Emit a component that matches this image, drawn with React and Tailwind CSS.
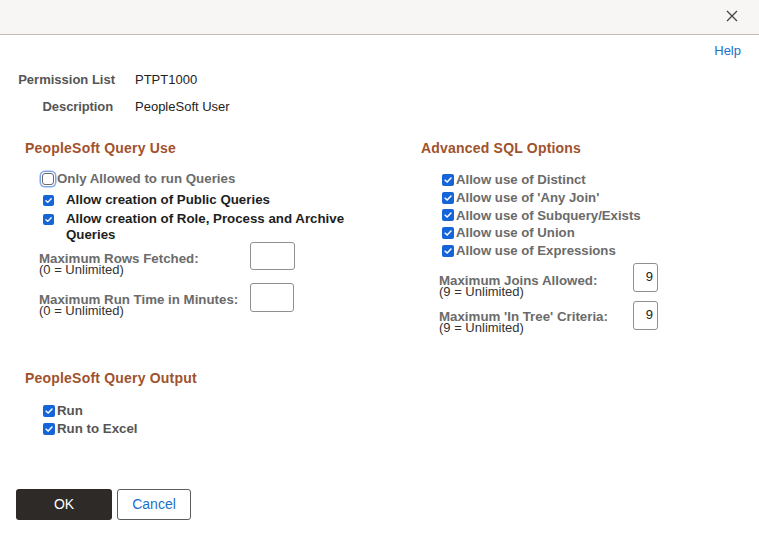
import React from "react";

function CheckBox({ checked, focused, size = 12 }) {
  if (!checked) {
    return (
      <span
        className={`inline-block shrink-0 rounded-[3px] border border-[#6b6b6b] bg-white ${
          focused ? "shadow-[0_0_0_1px_#fff,0_0_0_2.5px_#7ea7e8]" : ""
        }`}
        style={{ width: size, height: size }}
      />
    );
  }
  return (
    <span
      className="inline-flex shrink-0 items-center justify-center rounded-[2px] bg-[#1565d8]"
      style={{ width: size, height: size }}
    >
      <svg viewBox="0 0 12 12" width={size - 2} height={size - 2}>
        <path
          d="M2.6 6.2 L5 8.5 L9.6 3.6"
          fill="none"
          stroke="#fff"
          strokeWidth="1.8"
          strokeLinecap="round"
          strokeLinejoin="round"
        />
      </svg>
    </span>
  );
}

function LimitField({ label, note, value, rowClass, inputClass, labelPad }) {
  return (
    <div className={`flex ${rowClass}`}>
      <div className={`${labelPad} leading-[11px]`}>
        <div className="text-[13.3px] font-bold text-[#6b6b6b]">{label}</div>
        <div className="text-[#333]">{note}</div>
      </div>
      <div
        className={`${inputClass} rounded-[3px] border border-[#8f8f8f] bg-white pr-[4px] pt-[5px] text-right leading-[16px] text-[#222]`}
      >
        {value}
      </div>
    </div>
  );
}

const sqlOptions = [
  "Allow use of Distinct",
  "Allow use of 'Any Join'",
  "Allow use of Subquery/Exists",
  "Allow use of Union",
  "Allow use of Expressions",
];

export default function App() {
  return (
    <div className="relative h-[533px] w-[759px] overflow-hidden bg-white font-['Liberation_Sans',Arial,sans-serif] text-[13px] text-[#222]">
      {/* title bar */}
      <div className="flex h-[35px] items-center justify-end border-b border-[#c3bbb3] bg-[#f7f6f5] pr-[21px]">
        <svg width="12" height="12" viewBox="0 0 12 12" className="mt-[-2px]">
          <path d="M1 1 L11 11 M11 1 L1 11" stroke="#444" strokeWidth="1.3" />
        </svg>
      </div>

      {/* help link */}
      <div className="mt-[8px] flex h-[16px] justify-end pr-[18px] leading-[16px]">
        <span className="text-[#1b6fc8]">Help</span>
      </div>

      {/* permission list info */}
      <div className="mt-[13px] flex h-[16px] leading-[16px]">
        <div className="w-[115px] text-right font-bold text-[#555]">Permission List</div>
        <div className="ml-[20px]">PTPT1000</div>
      </div>
      <div className="mt-[11px] flex h-[16px] leading-[16px]">
        <div className="w-[113px] text-right font-bold tracking-[-0.1px] text-[#555]">Description</div>
        <div className="ml-[22px]">PeopleSoft User</div>
      </div>

      {/* two column options */}
      <div className="mt-[25px] grid grid-cols-[396px_1fr] pl-[25px]">
        <div>
          <h2 className="h-[17px] text-[14px] font-bold leading-[17px] tracking-[0.2px] text-[#a0522d]">PeopleSoft Query Use</h2>

          <div className="mt-[14px] flex h-[16px] items-center pl-[17px] leading-[16px]">
            <CheckBox focused size={12} />
            <span className="ml-[3px] text-[13.3px] font-bold text-[#6b6b6b]">Only Allowed to run Queries</span>
          </div>

          <div className="mt-[5px] flex pl-[18px] leading-[16px]">
            <div className="pt-[1px]"><CheckBox checked size={11} /></div>
            <span className="ml-[12px] text-[13.3px] font-bold text-[#1e1e1e]">Allow creation of Public Queries</span>
          </div>

          <div className="mt-[2px] flex pl-[18px] leading-[16px]">
            <div className="pt-[1px]"><CheckBox checked size={11} /></div>
            <span className="ml-[12px] w-[290px] text-[13.3px] font-bold text-[#1e1e1e]">
              Allow creation of Role, Process and Archive Queries
            </span>
          </div>

          <div className="mt-[-1px] pl-[14px]">
            <LimitField
              label="Maximum Rows Fetched:"
              note="(0 = Unlimited)"
              value=""
              rowClass="h-[28px]"
              labelPad="w-[211px] pt-[11px]"
              inputClass="h-[28px] w-[45px]"
            />
          </div>
          <div className="mt-[13px] pl-[14px]">
            <LimitField
              label="Maximum Run Time in Minutes:"
              note="(0 = Unlimited)"
              value=""
              rowClass="h-[29px]"
              labelPad="w-[211px] pt-[11px]"
              inputClass="h-[29px] w-[44px]"
            />
          </div>
        </div>

        <div>
          <h2 className="h-[17px] text-[14px] font-bold leading-[17px] tracking-[0.2px] text-[#a0522d]">Advanced SQL Options</h2>

          <div className="mt-[14px] pl-[21px] leading-[17.75px]">
            {sqlOptions.map((t) => (
              <div key={t} className="flex h-[17.75px] items-center">
                <CheckBox checked size={12} />
                <span className="ml-[2px] text-[13.2px] font-bold text-[#6b6b6b]">{t}</span>
              </div>
            ))}
          </div>

          <div className="mt-[3px] pl-[18px]">
            <LimitField
              label="Maximum Joins Allowed:"
              note="(9 = Unlimited)"
              value="9"
              rowClass="h-[29px]"
              labelPad="w-[194px] pt-[12px]"
              inputClass="h-[29px] w-[25px]"
            />
          </div>
          <div className="mt-[9px] pl-[18px]">
            <LimitField
              label="Maximum 'In Tree' Criteria:"
              note="(9 = Unlimited)"
              value="9"
              rowClass="h-[29px]"
              labelPad="w-[194px] pt-[10px]"
              inputClass="h-[29px] w-[25px]"
            />
          </div>
        </div>
      </div>

      {/* output section */}
      <div className="mt-[40px] pl-[25px]">
        <h2 className="h-[17px] text-[14px] font-bold leading-[17px] tracking-[0.2px] text-[#a0522d]">PeopleSoft Query Output</h2>
        <div className="mt-[15px] pl-[18px] leading-[18px]">
          {["Run", "Run to Excel"].map((t) => (
            <div key={t} className="flex h-[18px] items-center">
              <CheckBox checked size={12} />
              <span className="ml-[2px] text-[13.3px] font-bold text-[#555]">{t}</span>
            </div>
          ))}
        </div>
      </div>

      {/* footer buttons */}
      <div className="mt-[51px] flex gap-[5px] pl-[16px]">
        <button className="h-[31px] w-[96px] rounded-[3px] bg-[#2e2a27] text-[14px] text-white">OK</button>
        <button className="h-[31px] w-[74px] rounded-[3px] border border-[#5c5c5c] bg-white text-[14px] text-[#1b6fc8]">Cancel</button>
      </div>
    </div>
  );
}
